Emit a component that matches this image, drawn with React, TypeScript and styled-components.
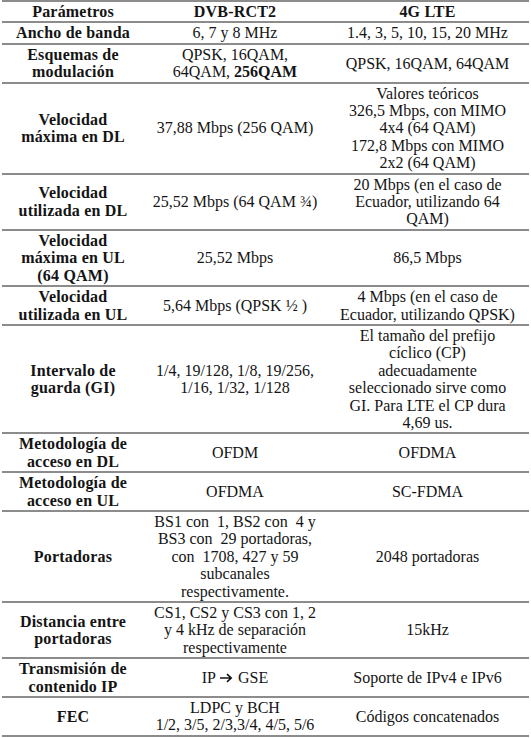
import React from "react";
import styled, { createGlobalStyle } from "styled-components";

const GlobalStyle = createGlobalStyle`
  html, body {
    margin: 0;
    padding: 0;
    background: #ffffff;
  }
  body {
    font-family: "Liberation Serif", "Times New Roman", "DejaVu Serif", serif;
    color: #141414;
  }
`;

const Table = styled.div`
  width: 531px;
  padding: 0 2px;
  box-sizing: border-box;
`;

const Row = styled.div<{ $first?: boolean }>`
  display: grid;
  grid-template-columns: 142px 182px 1fr;
  align-items: center;
  border-top: ${(p) => (p.$first ? "2px solid #8c8c8c" : "none")};
  border-bottom: 2px solid #8c8c8c;
  padding: 1px 0;
`;

const Cell = styled.div<{ $bold?: boolean }>`
  font-family: "Liberation Serif", "Times New Roman", "DejaVu Serif", serif;
  font-size: 16px;
  line-height: 17.4px;
  text-align: center;
  white-space: pre;
  font-weight: ${(p) => (p.$bold ? 700 : 400)};
  letter-spacing: ${(p) => (p.$bold ? "0.2px" : "0")};
`;

const Strong = styled.b`
  font-weight: 700;
`;

const Arrow = styled.svg`
  width: 13px;
  height: 10px;
  margin: 0 5px 0 4px;
  vertical-align: 0px;
`;

const RightArrow = () => (
  <Arrow viewBox="0 0 13 10">
    <path d="M0 5h10.5M7 1.2L11.2 5 7 8.8" fill="none" stroke="#141414" strokeWidth="1.6" />
  </Arrow>
);

type Line = React.ReactNode;

interface RowData {
  label: Line[];
  dvb: Line[];
  lte: Line[];
}

const rows: RowData[] = [
  { label: ["Ancho de banda"], dvb: ["6, 7 y 8 MHz"], lte: ["1.4, 3, 5, 10, 15, 20 MHz"] },
  {
    label: ["Esquemas de", "modulación"],
    dvb: ["QPSK, 16QAM,", <>64QAM, <Strong>256QAM</Strong></>],
    lte: ["QPSK, 16QAM, 64QAM"],
  },
  {
    label: ["Velocidad", "máxima en DL"],
    dvb: ["37,88 Mbps (256 QAM)"],
    lte: ["Valores teóricos", "326,5 Mbps, con MIMO", "4x4 (64 QAM)", "172,8 Mbps con MIMO", "2x2 (64 QAM)"],
  },
  {
    label: ["Velocidad", "utilizada en DL"],
    dvb: ["25,52 Mbps (64 QAM ¾)"],
    lte: ["20 Mbps (en el caso de", "Ecuador, utilizando 64", "QAM)"],
  },
  {
    label: ["Velocidad", "máxima en UL", "(64 QAM)"],
    dvb: ["25,52 Mbps"],
    lte: ["86,5 Mbps"],
  },
  {
    label: ["Velocidad", "utilizada en UL"],
    dvb: ["5,64 Mbps (QPSK ½ )"],
    lte: ["4 Mbps (en el caso de", "Ecuador, utilizando QPSK)"],
  },
  {
    label: ["Intervalo de", "guarda (GI)"],
    dvb: ["1/4, 19/128, 1/8, 19/256,", "1/16, 1/32, 1/128"],
    lte: [
      "El tamaño del prefijo",
      "cíclico (CP)",
      "adecuadamente",
      "seleccionado sirve como",
      "GI. Para LTE el CP dura",
      "4,69 us.",
    ],
  },
  { label: ["Metodología de", "acceso en DL"], dvb: ["OFDM"], lte: ["OFDMA"] },
  { label: ["Metodología de", "acceso en UL"], dvb: ["OFDMA"], lte: ["SC-FDMA"] },
  {
    label: ["Portadoras"],
    dvb: [
      "BS1 con  1, BS2 con  4 y",
      "BS3 con  29 portadoras,",
      "con  1708, 427 y 59",
      "subcanales",
      "respectivamente.",
    ],
    lte: ["2048 portadoras"],
  },
  {
    label: ["Distancia entre", "portadoras"],
    dvb: ["CS1, CS2 y CS3 con 1, 2", "y 4 kHz de separación", "respectivamente"],
    lte: ["15kHz"],
  },
  {
    label: ["Transmisión de", "contenido IP"],
    dvb: [<>IP<RightArrow />GSE</>],
    lte: ["Soporte de IPv4 e IPv6"],
  },
  {
    label: ["FEC"],
    dvb: ["LDPC y BCH", "1/2, 3/5, 2/3,3/4, 4/5, 5/6"],
    lte: ["Códigos concatenados"],
  },
];

const Lines: React.FC<{ lines: Line[] }> = ({ lines }) => (
  <>
    {lines.map((l, i) => (
      <React.Fragment key={i}>
        {i > 0 && <br />}
        {l}
      </React.Fragment>
    ))}
  </>
);

export default function App() {
  return (
    <>
      <GlobalStyle />
      <Table>
        <Row $first>
          <Cell $bold>Parámetros</Cell>
          <Cell $bold>DVB-RCT2</Cell>
          <Cell $bold>4G LTE</Cell>
        </Row>
        {rows.map((r, i) => (
          <Row key={i}>
            <Cell $bold>
              <Lines lines={r.label} />
            </Cell>
            <Cell>
              <Lines lines={r.dvb} />
            </Cell>
            <Cell>
              <Lines lines={r.lte} />
            </Cell>
          </Row>
        ))}
      </Table>
    </>
  );
}
